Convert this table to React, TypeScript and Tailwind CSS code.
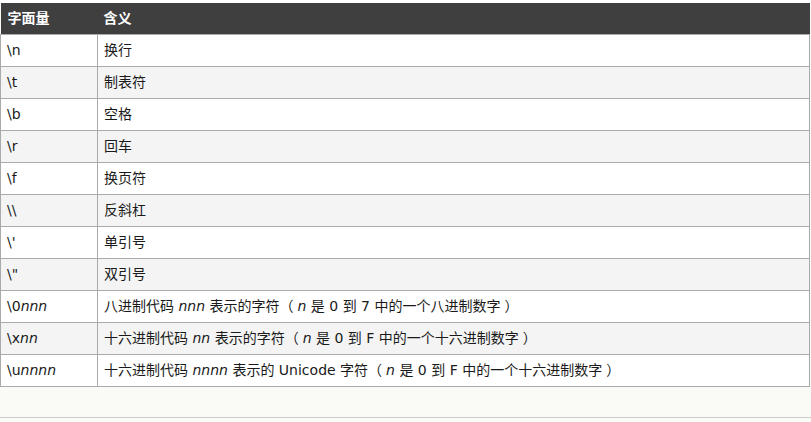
const L = () => <span className="mr-[4px]">（</span>;
const R = () => <span className="ml-[4px]">）</span>;

const rows: [React.ReactNode, React.ReactNode][] = [
  ["\\n", "换行"],
  ["\\t", "制表符"],
  ["\\b", "空格"],
  ["\\r", "回车"],
  ["\\f", "换页符"],
  ["\\\\", "反斜杠"],
  ["\\'", "单引号"],
  ['\\"', "双引号"],
  [
    <>\0<i>nnn</i></>,
    <>八进制代码 <i>nnn</i> 表示的字符<L /><i>n</i> 是 0 到 7 中的一个八进制数字<R /></>,
  ],
  [
    <>\x<i>nn</i></>,
    <>十六进制代码 <i>nn</i> 表示的字符<L /><i>n</i> 是 0 到 F 中的一个十六进制数字<R /></>,
  ],
  [
    <>\u<i>nnnn</i></>,
    <>十六进制代码 <i>nnnn</i> 表示的 Unicode 字符<L /><i>n</i> 是 0 到 F 中的一个十六进制数字<R /></>,
  ],
];

export default function App() {
  return (
    <div
      className="w-[811px] h-[422px] bg-[#fafaf6] text-[14px] text-[#1a1a1a]"
      style={{ fontFamily: '"DejaVu Sans", "Noto Sans CJK SC", sans-serif' }}
    >
      <div className="h-[3px] bg-white" />
      <table className="w-[810px] border-collapse table-fixed">
        <colgroup>
          <col className="w-[97px]" />
          <col />
        </colgroup>
        <thead>
          <tr className="bg-[#3f3f3f] text-white h-[31px]">
            <th className="text-left font-bold px-[7px]">字面量</th>
            <th className="text-left font-bold px-[6px]">含义</th>
          </tr>
        </thead>
        <tbody>
          {rows.map(([a, b], i) => (
            <tr key={i} className={i % 2 ? "bg-[#f4f4f4] h-[32px]" : "bg-white h-[32px]"}>
              <td className="border border-[#aaaaaa] px-[6px] whitespace-nowrap">{a}</td>
              <td className="border border-[#aaaaaa] px-[6px] whitespace-nowrap">{b}</td>
            </tr>
          ))}
        </tbody>
      </table>
      <div className="h-[30px]" />
      <div className="border-t border-[#cccccc]" />
    </div>
  );
}
